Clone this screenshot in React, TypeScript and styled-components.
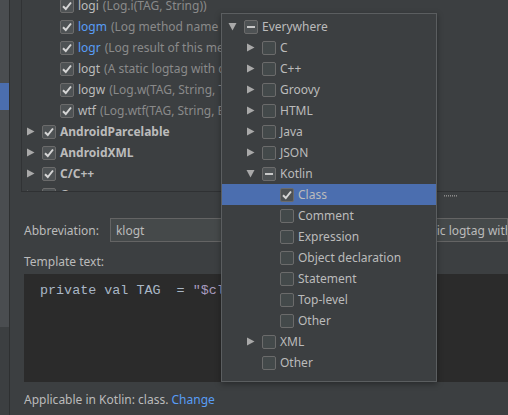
import React from "react";
import styled, { createGlobalStyle } from "styled-components";

const GlobalStyle = createGlobalStyle`
  html, body {
    margin: 0;
    padding: 0;
    background: #3c3f41;
    overflow: hidden;
  }
  * {
    box-sizing: border-box;
  }
`;

const UI_FONT = `"Noto Sans", "Open Sans", sans-serif`;

const Page = styled.div`
  position: relative;
  width: 508px;
  height: 415px;
  display: flex;
  background: #3c3f41;
  font-family: ${UI_FONT};
  font-size: 12px;
  color: #bbbbbb;
  overflow: hidden;
`;

const SideStrip = styled.div`
  width: 10px;
  flex-shrink: 0;
  display: flex;
  flex-direction: column;
  border-right: 1px solid #2e3031;
`;

const SideTop = styled.div`
  height: 327px;
  background: #4a4d50;
  padding-top: 83px;
`;

const SideActive = styled.div`
  height: 27px;
  background: #4b6eaf;
`;

const SideBottom = styled.div`
  flex: 1;
  background: #3c3f41;
`;

const Content = styled.div`
  flex: 1;
  display: flex;
  flex-direction: column;
  min-width: 0;
`;

const TreePanel = styled.div`
  height: 192px;
  margin-left: 11px;
  border-left: 1px solid #313335;
  border-bottom: 1px solid #2f3133;
  overflow: hidden;
`;

// list is scrolled a little, so the first row is cut at the top
const TreeList = styled.div`
  margin-top: -5px;
`;

const Splitter = styled.div`
  height: 26px;
  display: flex;
  justify-content: flex-end;
  padding: 3px 51px 0 0;
`;

const Grip = styled.span`
  width: 13px;
  height: 2px;
  border-top: 1px dotted #8a8a8a;
  border-bottom: 1px dotted #6a6a6a;
`;

const Form = styled.div`
  padding-left: 14px;
  display: flex;
  flex-direction: column;
`;

const FieldRow = styled.div`
  display: flex;
  align-items: center;
  height: 24px;
  white-space: nowrap;
`;

const Label = styled.span<{ $gap?: number; $lead?: number }>`
  color: #bbbbbb;
  margin-left: ${(p) => p.$lead ?? 0}px;
  margin-right: ${(p) => p.$gap ?? 0}px;
`;

const TextField = styled.div<{ $width?: number }>`
  height: 24px;
  ${(p) => (p.$width ? `width: ${p.$width}px;` : "flex: 1;")}
  flex-shrink: 0;
  background: #45494a;
  border: 1px solid #646464;
  padding: 0 5px;
  display: flex;
  align-items: center;
  color: #bbbbbb;
  overflow: hidden;
  white-space: nowrap;
`;

const SectionLabel = styled.div`
  margin-top: 12px;
  height: 16px;
  line-height: 16px;
`;

const Editor = styled.div`
  margin-top: 4px;
  height: 108px;
  background: #2b2b2b;
  padding: 9px 0 0 16px;
  font-family: "Liberation Mono", "DejaVu Sans Mono", monospace;
  font-size: 13.4px;
  color: #a9b7c6;
  white-space: pre;
`;

const TemplateVar = styled.span`
  color: #a99bbf;
`;

const Footer = styled.div`
  margin-top: 8px;
  height: 20px;
  line-height: 20px;
`;

const Link = styled.span`
  color: #589df6;
`;

const Popup = styled.div`
  position: absolute;
  left: 221px;
  top: 13px;
  width: 216px;
  height: 369px;
  background: #3c3f41;
  border: 1px solid #5b5e60;
  box-shadow: 0 2px 6px rgba(0, 0, 0, 0.35);
  padding-top: 2px;
`;

const Row = styled.div<{ $pad: number; $selected?: boolean }>`
  height: 21px;
  display: flex;
  align-items: center;
  padding-left: ${(p) => p.$pad}px;
  background: ${(p) => (p.$selected ? "#4b6eaf" : "transparent")};
  white-space: nowrap;
`;

const ArrowSlot = styled.span`
  width: 18px;
  flex-shrink: 0;
  display: flex;
  align-items: center;
  padding-left: 2px;
`;

const Box = styled.span<{ $filled?: boolean }>`
  width: 14px;
  height: 14px;
  flex-shrink: 0;
  border: 1px solid #6b6b6b;
  border-radius: 2px;
  background: ${(p) => (p.$filled ? "#4e5254" : "#43494a")};
  display: flex;
  align-items: center;
  justify-content: center;
`;

const RowText = styled.span<{ $bold?: boolean; $color?: string }>`
  margin-left: 4px;
  font-weight: ${(p) => (p.$bold ? 700 : 400)};
  color: ${(p) => p.$color ?? "#bbbbbb"};
`;

const Hint = styled.span`
  color: #8a8a8a;
  margin-left: 4px;
`;

type Arrow = "none" | "right" | "down";
type Check = "on" | "off" | "mixed";

function ArrowIcon({ dir }: { dir: Arrow }) {
  if (dir === "none") return null;
  return (
    <svg width="9" height="9" viewBox="0 0 9 9">
      {dir === "right" ? (
        <polygon points="1,0.5 8.5,4.5 1,8.5" fill="#a9a9a9" />
      ) : (
        <polygon points="0.5,1 8.5,1 4.5,8.5" fill="#a9a9a9" />
      )}
    </svg>
  );
}

function CheckBox({ state, selected }: { state: Check; selected?: boolean }) {
  return (
    <Box $filled={state !== "off" || selected}>
      {state === "on" && (
        <svg width="12" height="12" viewBox="0 0 12 12">
          <path d="M2 6.2 L4.8 9 L10 2.5" stroke="#d6d6d6" strokeWidth="2" fill="none" />
        </svg>
      )}
      {state === "mixed" && (
        <svg width="10" height="10" viewBox="0 0 10 10">
          <rect x="1" y="4" width="8" height="2" fill="#c8c8c8" />
        </svg>
      )}
    </Box>
  );
}

type Node = {
  label: string;
  level: number;
  arrow: Arrow;
  check: Check;
  hint?: string;
  bold?: boolean;
  color?: string;
  selected?: boolean;
};

const templates: Node[] = [
  { label: "logi", hint: "(Log.i(TAG, String))", level: 1, arrow: "none", check: "on" },
  { label: "logm", hint: "(Log method name and its arguments)", level: 1, arrow: "none", check: "on", color: "#589df6" },
  { label: "logr", hint: "(Log result of this method)", level: 1, arrow: "none", check: "on", color: "#589df6" },
  { label: "logt", hint: "(A static logtag with current class's name)", level: 1, arrow: "none", check: "on" },
  { label: "logw", hint: "(Log.w(TAG, String, Throwable))", level: 1, arrow: "none", check: "on" },
  { label: "wtf", hint: "(Log.wtf(TAG, String, Exception))", level: 1, arrow: "none", check: "on" },
  { label: "AndroidParcelable", level: 0, arrow: "right", check: "on", bold: true },
  { label: "AndroidXML", level: 0, arrow: "right", check: "on", bold: true },
  { label: "C/C++", level: 0, arrow: "right", check: "on", bold: true },
  { label: "Groovy", level: 0, arrow: "right", check: "on", bold: true },
];

const contexts: Node[] = [
  { label: "Everywhere", level: 0, arrow: "down", check: "mixed" },
  { label: "C", level: 1, arrow: "right", check: "off" },
  { label: "C++", level: 1, arrow: "right", check: "off" },
  { label: "Groovy", level: 1, arrow: "right", check: "off" },
  { label: "HTML", level: 1, arrow: "right", check: "off" },
  { label: "Java", level: 1, arrow: "right", check: "off" },
  { label: "JSON", level: 1, arrow: "right", check: "off" },
  { label: "Kotlin", level: 1, arrow: "down", check: "mixed" },
  { label: "Class", level: 2, arrow: "none", check: "on", selected: true },
  { label: "Comment", level: 2, arrow: "none", check: "off" },
  { label: "Expression", level: 2, arrow: "none", check: "off" },
  { label: "Object declaration", level: 2, arrow: "none", check: "off" },
  { label: "Statement", level: 2, arrow: "none", check: "off" },
  { label: "Top-level", level: 2, arrow: "none", check: "off" },
  { label: "Other", level: 2, arrow: "none", check: "off" },
  { label: "XML", level: 1, arrow: "right", check: "off" },
  { label: "Other", level: 1, arrow: "none", check: "off" },
];

function TreeRow({ node, base }: { node: Node; base: number }) {
  return (
    <Row $pad={base + node.level * 18} $selected={node.selected}>
      <ArrowSlot>
        <ArrowIcon dir={node.arrow} />
      </ArrowSlot>
      <CheckBox state={node.check} selected={node.selected} />
      <RowText $bold={node.bold} $color={node.color}>
        {node.label}
      </RowText>
      {node.hint && <Hint>{node.hint}</Hint>}
    </Row>
  );
}

export default function App() {
  return (
    <Page>
      <GlobalStyle />
      <SideStrip>
        <SideTop>
          <SideActive />
        </SideTop>
        <SideBottom />
      </SideStrip>
      <Content>
        <TreePanel>
          <TreeList>
            {templates.map((n, i) => (
              <TreeRow key={i} node={n} base={2} />
            ))}
          </TreeList>
        </TreePanel>
        <Splitter>
          <Grip />
        </Splitter>
        <Form>
          <FieldRow>
            <Label $gap={11}>Abbreviation:</Label>
            <TextField $width={203}>klogt</TextField>
            <Label $lead={10} $gap={8}>
              Description:
            </Label>
            <TextField>A static logtag with current class's name</TextField>
          </FieldRow>
          <SectionLabel>Template text:</SectionLabel>
          <Editor>
            {"private val TAG  = "}
            <TemplateVar>"$className$"</TemplateVar>
          </Editor>
          <Footer>
            Applicable in Kotlin: class. <Link>Change</Link>
          </Footer>
        </Form>
      </Content>
      <Popup>
        {contexts.map((n, i) => (
          <TreeRow key={i} node={n} base={4} />
        ))}
      </Popup>
    </Page>
  );
}
